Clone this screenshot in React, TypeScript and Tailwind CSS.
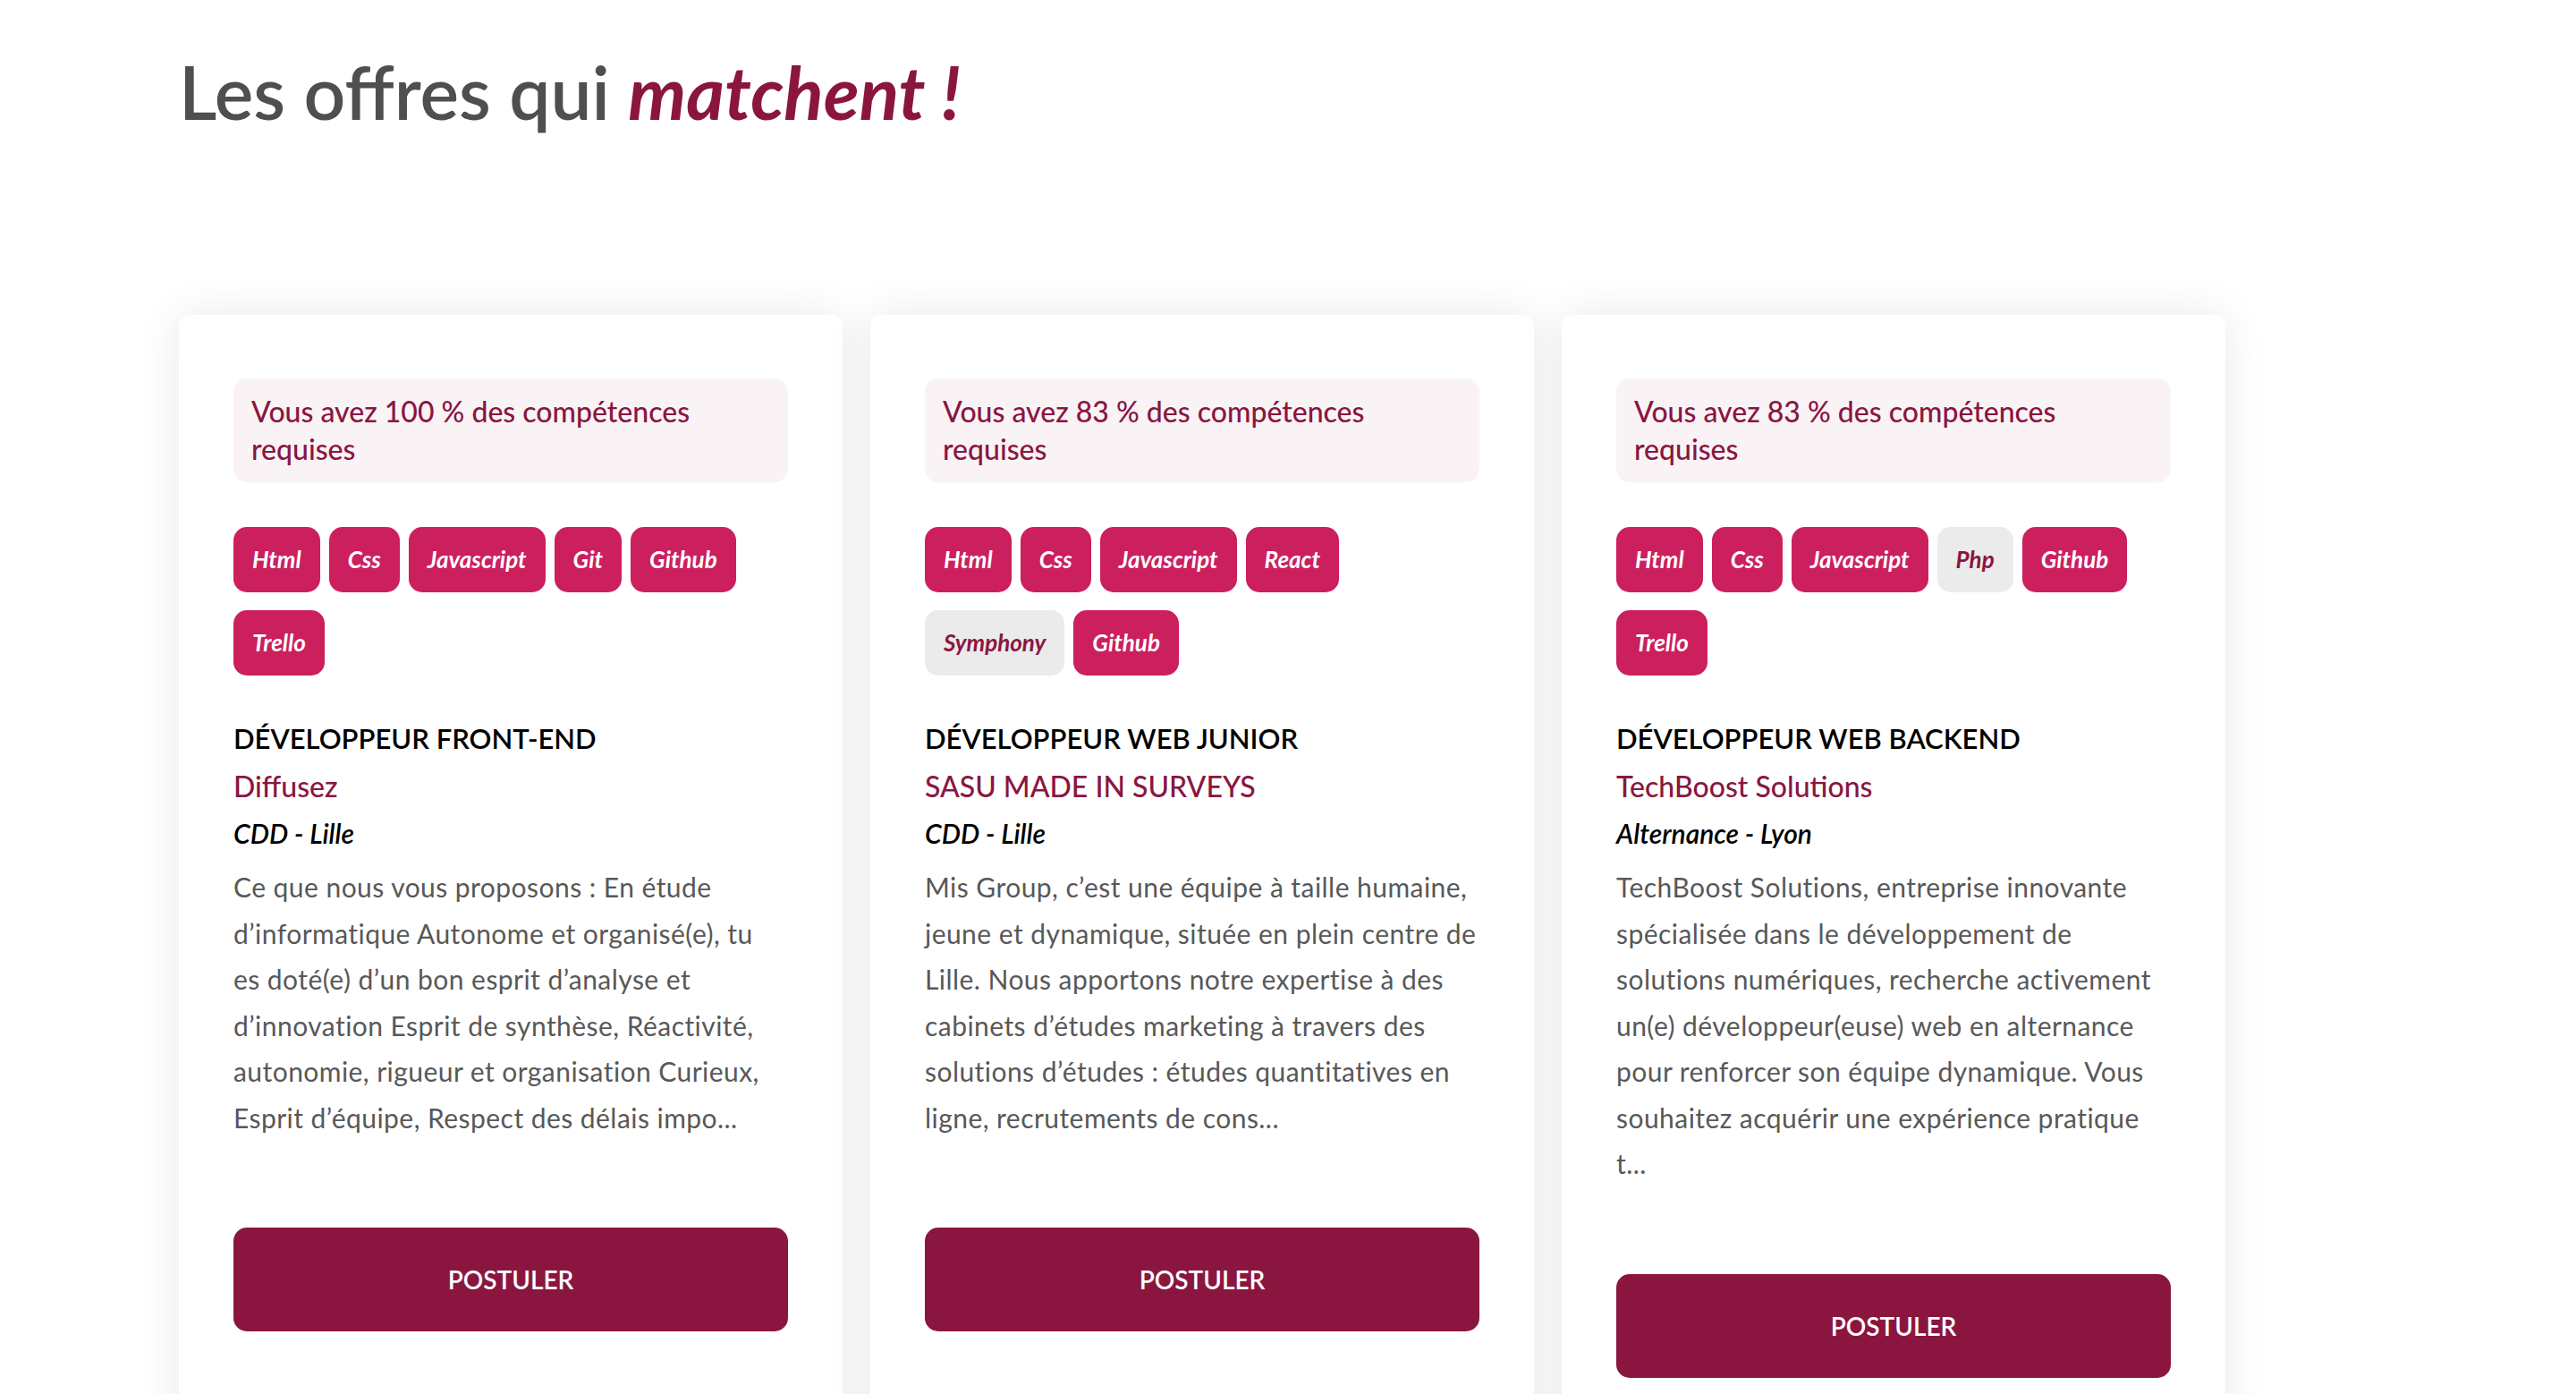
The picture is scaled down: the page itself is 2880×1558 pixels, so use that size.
import React from 'react'

type Offer = {
  percent: number
  skills: { name: string; owned: boolean }[]
  title: string
  company: string
  contract: string
  lines: string[]
}

const offers: Offer[] = [
  {
    percent: 100,
    skills: [
      { name: 'Html', owned: true },
      { name: 'Css', owned: true },
      { name: 'Javascript', owned: true },
      { name: 'Git', owned: true },
      { name: 'Github', owned: true },
      { name: 'Trello', owned: true },
    ],
    title: 'DÉVELOPPEUR FRONT-END',
    company: 'Diffusez',
    contract: 'CDD - Lille',
    lines: [
      'Ce que nous vous proposons : En étude',
      'd’informatique Autonome et organisé(e), tu',
      'es doté(e) d’un bon esprit d’analyse et',
      'd’innovation Esprit de synthèse, Réactivité,',
      'autonomie, rigueur et organisation Curieux,',
      'Esprit d’équipe, Respect des délais impo...',
    ],
  },
  {
    percent: 83,
    skills: [
      { name: 'Html', owned: true },
      { name: 'Css', owned: true },
      { name: 'Javascript', owned: true },
      { name: 'React', owned: true },
      { name: 'Symphony', owned: false },
      { name: 'Github', owned: true },
    ],
    title: 'DÉVELOPPEUR WEB JUNIOR',
    company: 'SASU MADE IN SURVEYS',
    contract: 'CDD - Lille',
    lines: [
      'Mis Group, c’est une équipe à taille humaine,',
      'jeune et dynamique, située en plein centre de',
      'Lille. Nous apportons notre expertise à des',
      'cabinets d’études marketing à travers des',
      'solutions d’études : études quantitatives en',
      'ligne, recrutements de cons...',
    ],
  },
  {
    percent: 83,
    skills: [
      { name: 'Html', owned: true },
      { name: 'Css', owned: true },
      { name: 'Javascript', owned: true },
      { name: 'Php', owned: false },
      { name: 'Github', owned: true },
      { name: 'Trello', owned: true },
    ],
    title: 'DÉVELOPPEUR WEB BACKEND',
    company: 'TechBoost Solutions',
    contract: 'Alternance - Lyon',
    lines: [
      'TechBoost Solutions, entreprise innovante',
      'spécialisée dans le développement de',
      'solutions numériques, recherche activement',
      'un(e) développeur(euse) web en alternance',
      'pour renforcer son équipe dynamique. Vous',
      'souhaitez acquérir une expérience pratique',
      't...',
    ],
  },
]

function OfferCard({ offer }: { offer: Offer }) {
  return (
    <div className="w-[742px] shrink-0 rounded-xl bg-white px-[61px] pt-[71px] pb-[90px] shadow-[0_0_50px_rgba(0,0,0,0.09)]">
      <div className="rounded-[15px] bg-[#f9f3f6] px-5 py-4 text-[32px] leading-[42px] font-medium text-[#8a1640]">
        {`Vous avez ${offer.percent} % des compétences requises`}
      </div>

      <div className="mt-[50px] flex flex-wrap gap-x-[10px] gap-y-[20px]">
        {offer.skills.map((s) => (
          <span
            key={s.name}
            className={
              s.owned
                ? 'flex h-[73px] items-center rounded-[15px] bg-[#cc1f5e] px-[21px] text-[26px] font-bold italic text-white'
                : 'flex h-[73px] items-center rounded-[15px] bg-[#ebebeb] px-[21px] text-[26px] font-bold italic text-[#8a1640]'
            }
          >
            {s.name}
          </span>
        ))}
      </div>

      <h3 className="mt-[48px] text-[31px] leading-[44px] font-semibold text-black">{offer.title}</h3>
      <p className="mt-[10px] text-[32px] leading-[44px] font-medium text-[#8a1640]">{offer.company}</p>
      <p className="mt-[8px] text-[30px] leading-[44px] font-semibold italic text-black">{offer.contract}</p>
      <p className="mt-[13px] text-[30px] leading-[51.5px] tracking-[0.015em] text-[#585858]">
        {offer.lines.map((l, i) => (
          <span key={i} className="block whitespace-nowrap">
            {l}
          </span>
        ))}
      </p>

      <button className="mt-[97px] h-[116px] w-full rounded-[15px] bg-[#8a1640] text-[28px] font-semibold text-white">
        POSTULER
      </button>
    </div>
  )
}

export default function App() {
  return (
    <div className="min-h-screen bg-white pl-[200px] pt-[52px] font-['Lato',sans-serif]">
      <h1 className="text-[82px] leading-[100px] font-semibold text-[#4f4f4f]">
        Les offres qui <span className="font-bold italic text-[#8a1640]">matchent !</span>
      </h1>

      <div className="mt-[200px] flex gap-[31px]">
        {offers.map((o, i) => (
          <OfferCard key={i} offer={o} />
        ))}
      </div>
    </div>
  )
}
